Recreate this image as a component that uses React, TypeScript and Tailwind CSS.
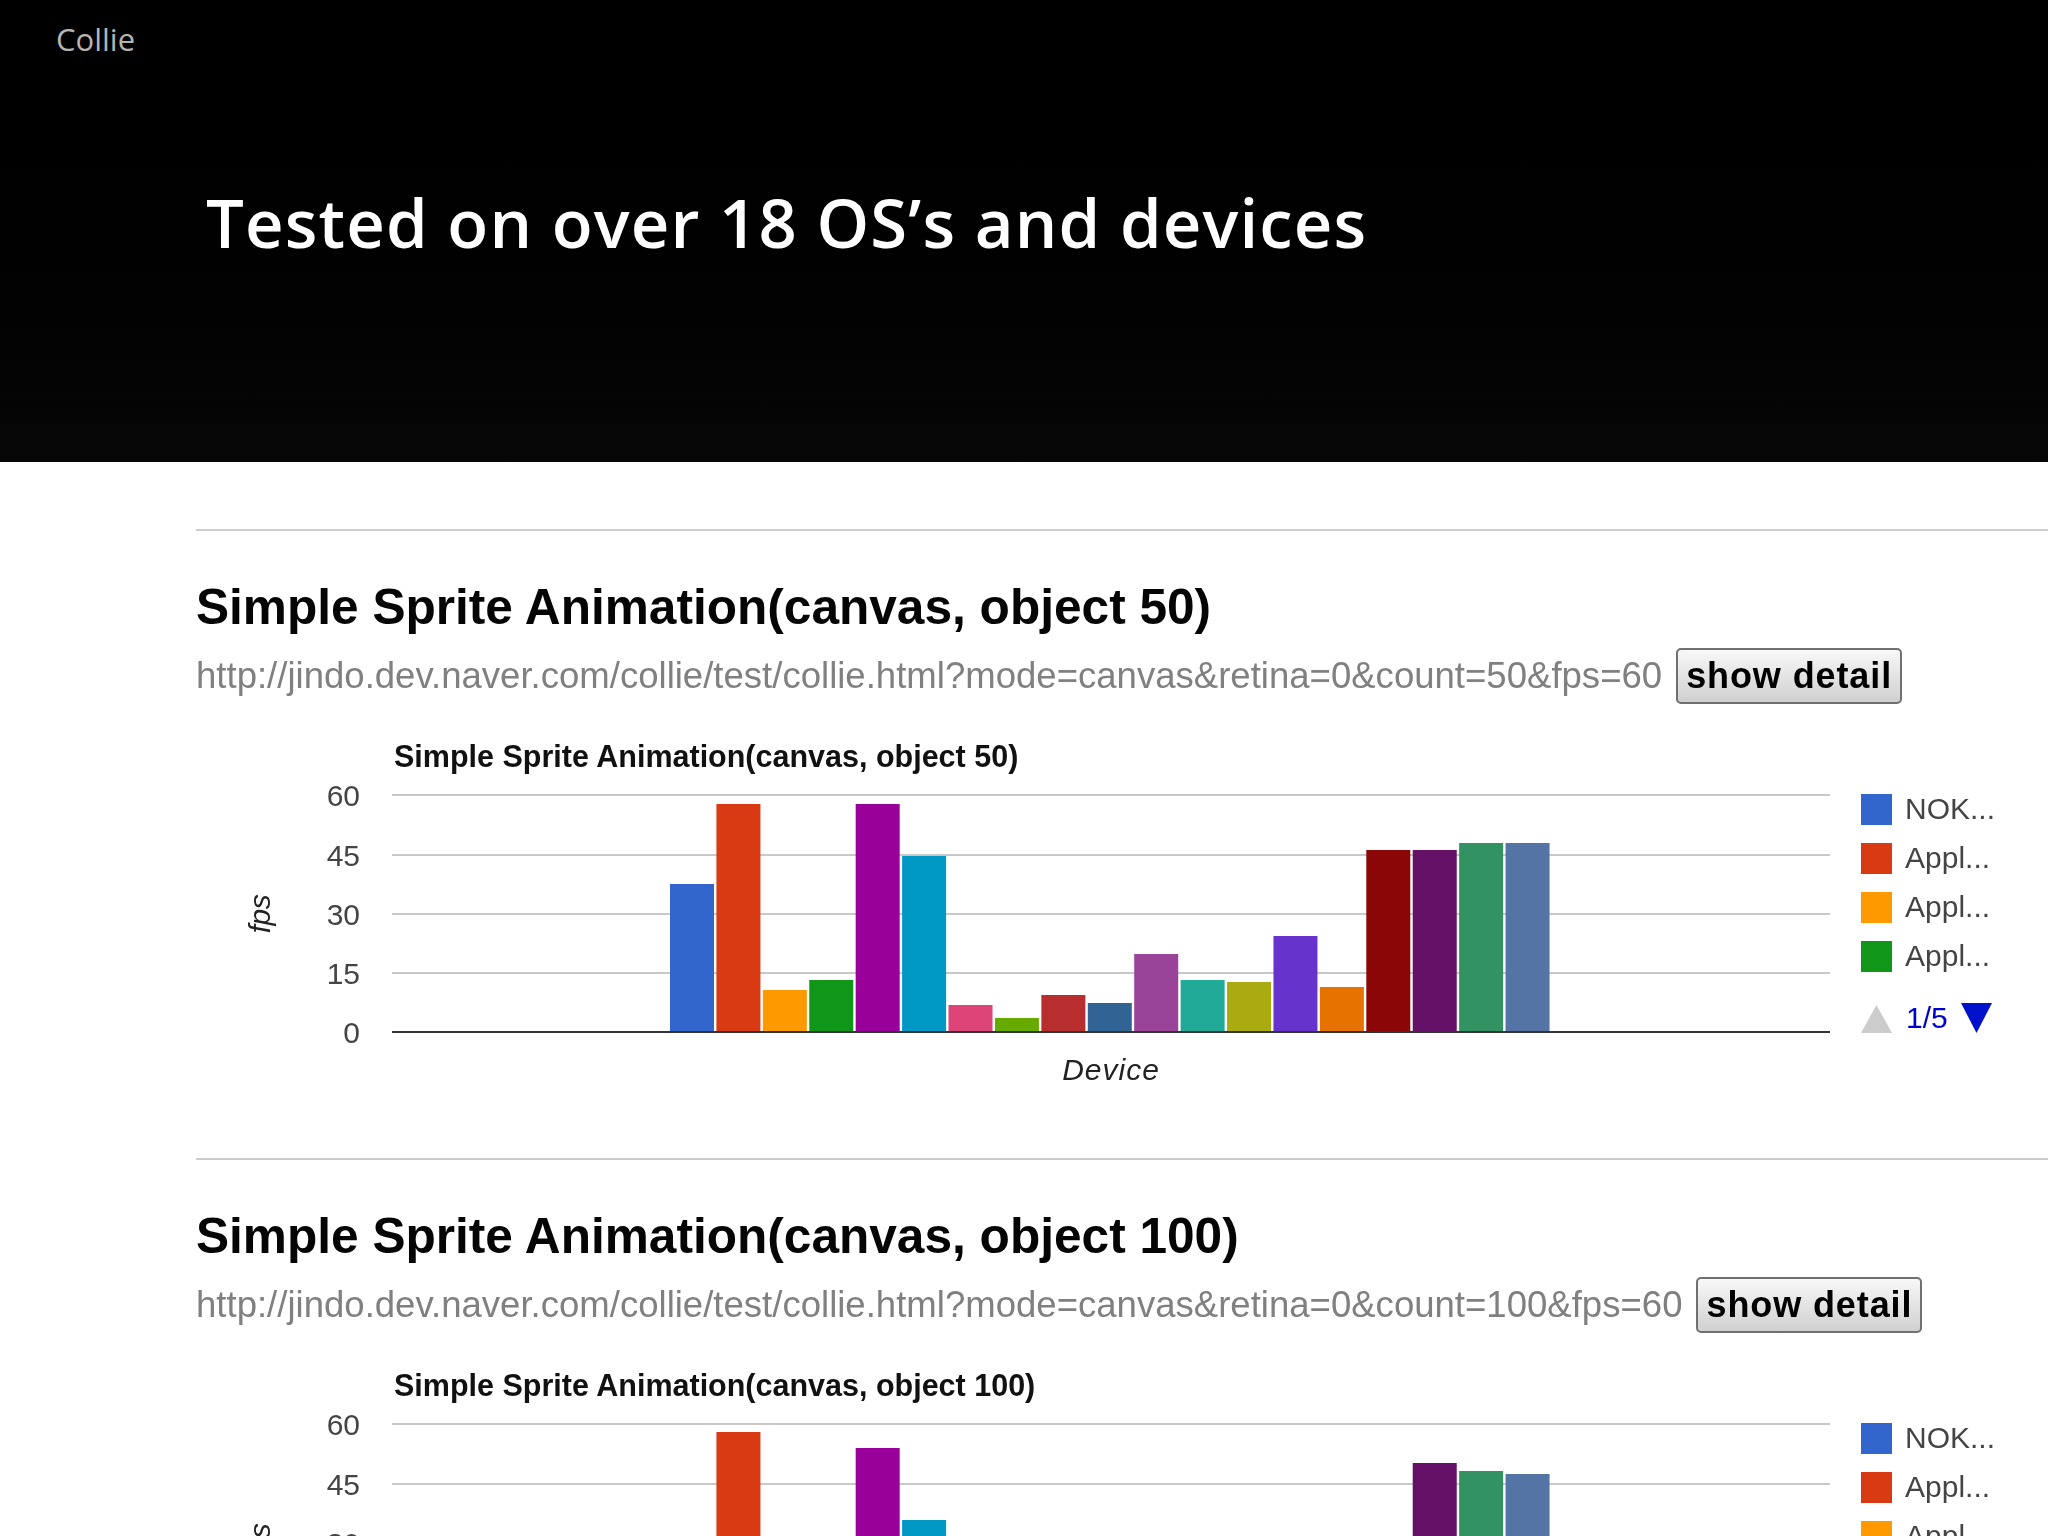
const barColors = [
  '#3366cc', '#d83a13', '#ff9900', '#109618', '#990099', '#0099c6', '#dd4477', '#66aa00', '#b82e2e', '#316395',
  '#994499', '#22aa99', '#aaaa11', '#6633cc', '#e67300', '#8b0707', '#651067', '#329262', '#5574a6',
]

const gridLines = [
  { label: '60', y: 795 },
  { label: '45', y: 855 },
  { label: '30', y: 914 },
  { label: '15', y: 973 },
]

const legend = ['NOK...', 'Appl...', 'Appl...', 'Appl...']

const tests = [
  {
    title: 'Simple Sprite Animation(canvas, object 50)',
    url: 'http://jindo.dev.naver.com/collie/test/collie.html?mode=canvas&retina=0&count=50&fps=60',
    heights: [148, 228, 42, 52, 228, 176, 27, 14, 37, 29, 78, 52, 50, 96, 45, 182, 182, 189, 189],
  },
  {
    title: 'Simple Sprite Animation(canvas, object 100)',
    url: 'http://jindo.dev.naver.com/collie/test/collie.html?mode=canvas&retina=0&count=100&fps=60',
    heights: [90, 229, 40, 50, 213, 141, 25, 15, 35, 30, 70, 50, 48, 90, 44, 110, 198, 190, 187],
  },
]

function Chart({ title, heights }: { title: string; heights: number[] }) {
  return (
    <svg viewBox="196 730 1852 400" className="mt-[26px] block h-[400px] w-[1852px] font-['Liberation_Sans',sans-serif]">
      <text x="394" y="767" className="fill-[#111] text-[30.5px] font-bold">{title}</text>

      {gridLines.map((g) => (
        <g key={g.label}>
          <rect x="392" y={g.y - 1} width="1438" height="2" className="fill-[#c8c8c8]" />
          <text x="360" y={g.y + 11} textAnchor="end" className="fill-[#444] text-[30px]">{g.label}</text>
        </g>
      ))}
      <text x="360" y="1043" textAnchor="end" className="fill-[#444] text-[30px]">0</text>

      {heights.map((h, i) => (
        <rect key={i} x={670 + i * 46.42} y={1032 - h} width="44" height={h} fill={barColors[i]} />
      ))}
      <rect x="392" y="1031" width="1438" height="2" className="fill-[#333]" />

      <text x="1111" y="1080" textAnchor="middle" className="fill-[#222] text-[30px] italic tracking-[1px]">Device</text>
      <text transform="translate(270 914) rotate(-90)" textAnchor="middle" className="fill-[#222] text-[30px] italic tracking-[-0.5px]">fps</text>

      {legend.map((label, i) => (
        <g key={i}>
          <rect x="1861" y={794 + i * 49} width="31" height="31" fill={barColors[i]} />
          <text x="1905" y={819 + i * 49} className="fill-[#444] text-[30px]">{label}</text>
        </g>
      ))}
      <polygon points="1861,1033 1892,1033 1876.5,1005" className="fill-[#ccc]" />
      <text x="1906" y="1028" className="fill-[#0000cc] text-[30px]">1/5</text>
      <polygon points="1961,1003 1992,1003 1976.5,1033" className="fill-[#0011cc]" />
    </svg>
  )
}

function TestResult({ title, url, heights }: { title: string; url: string; heights: number[] }) {
  return (
    <section className="h-[629px] border-t-2 border-[#ccc] font-['Liberation_Sans',sans-serif]">
      <h2 className="mt-[48px] text-[49.6px] leading-[56px] font-bold text-[#050505]">{title}</h2>
      <div className="mt-[13px] flex items-center gap-[14px]">
        <span className="text-[36.55px] leading-[56px] text-[#808080]">{url}</span>
        <button className="h-[56px] rounded-[5px] border-2 border-[#707070] bg-gradient-to-b from-[#f8f8f8] to-[#d0d0d0] px-[8px] text-[36px] leading-none font-bold tracking-[0.9px] text-black">
          show detail
        </button>
      </div>
      <Chart title={title} heights={heights} />
    </section>
  )
}

export default function App() {
  return (
    <div className="h-[1536px] w-[2048px] overflow-hidden bg-white">
      <header className="h-[462px] bg-gradient-to-b from-black to-[#070707] pl-[206px] font-['Open_Sans',sans-serif]">
        <p className="-ml-[150px] pt-[19px] text-[31px] leading-[40px] text-[#b4b4b4]">Collie</p>
        <h1 className="mt-[118px] text-[67px] leading-[90px] font-semibold tracking-[1.15px] text-white">Tested on over 18 OS’s and devices</h1>
      </header>
      <main className="pt-[67px] pl-[196px] blur-[0.5px]">
        {tests.map((t) => (
          <TestResult key={t.title} {...t} />
        ))}
      </main>
    </div>
  )
}
